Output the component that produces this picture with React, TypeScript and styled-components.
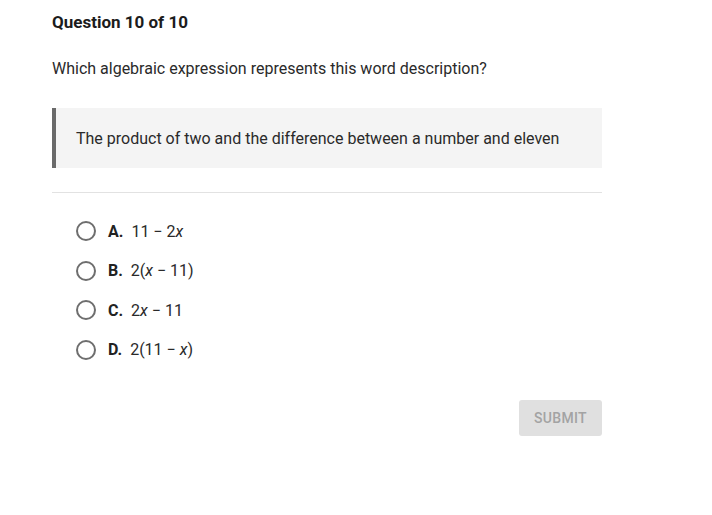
import React from 'react';
import styled, { createGlobalStyle } from 'styled-components';

const Global = createGlobalStyle`
  body {
    margin: 0;
    background: #fff;
    font-family: Roboto, 'Liberation Sans', sans-serif;
    color: #222;
  }
`;

const Page = styled.div`
  width: 550px;
  padding: 11px 0 0 52px;
`;

const Title = styled.h1`
  margin: 0;
  font-size: 17px;
  font-weight: 700;
  line-height: 22px;
  color: #1c1c1c;
`;

const Prompt = styled.p`
  margin: 26px 0 0;
  font-size: 16px;
  line-height: 20px;
  color: #2a2a2a;
`;

const Quote = styled.div`
  margin-top: 29px;
  height: 60px;
  display: flex;
  align-items: center;
  background: #f4f4f4;
  border-left: 4px solid #6a6a6a;
  padding-left: 20px;
  font-size: 16px;
  color: #2a2a2a;
`;

const Divider = styled.hr`
  margin: 24px 0 0;
  border: 0;
  border-top: 1px solid #e2e2e2;
`;

const Options = styled.div`
  display: flex;
  flex-direction: column;
  gap: 19.6px;
  padding: 28px 0 0 24px;
`;

const Option = styled.label`
  display: flex;
  align-items: center;
  height: 20px;
  font-size: 16px;
  color: #2a2a2a;
`;

const Radio = styled.span`
  width: 16px;
  height: 16px;
  border: 2px solid #6e6e6e;
  border-radius: 50%;
  margin-right: 12px;
  flex-shrink: 0;
`;

const Letter = styled.b`
  font-weight: 700;
  margin-right: 8px;
  color: #222;
`;

const Footer = styled.div`
  display: flex;
  justify-content: flex-end;
  margin-top: 40px;
`;

const Submit = styled.button`
  width: 83px;
  height: 36px;
  border: 0;
  border-radius: 3px;
  background: #e0e0e0;
  color: #a3a3a3;
  font-family: Roboto, 'Liberation Sans', sans-serif;
  font-size: 14px;
  font-weight: 500;
  letter-spacing: 0.3px;
`;

const options: [string, React.ReactNode][] = [
  ['A.', <>11 − 2<i>x</i></>],
  ['B.', <>2(<i>x</i> − 11)</>],
  ['C.', <>2<i>x</i> − 11</>],
  ['D.', <>2(11 − <i>x</i>)</>],
];

export default function App() {
  return (
    <>
      <Global />
      <Page>
        <Title>Question 10 of 10</Title>
        <Prompt>Which algebraic expression represents this word description?</Prompt>
        <Quote>The product of two and the difference between a number and eleven</Quote>
        <Divider />
        <Options>
          {options.map(([l, e]) => (
            <Option key={l}>
              <Radio />
              <Letter>{l}</Letter>
              <span>{e}</span>
            </Option>
          ))}
        </Options>
        <Footer>
          <Submit disabled>SUBMIT</Submit>
        </Footer>
      </Page>
    </>
  );
}
